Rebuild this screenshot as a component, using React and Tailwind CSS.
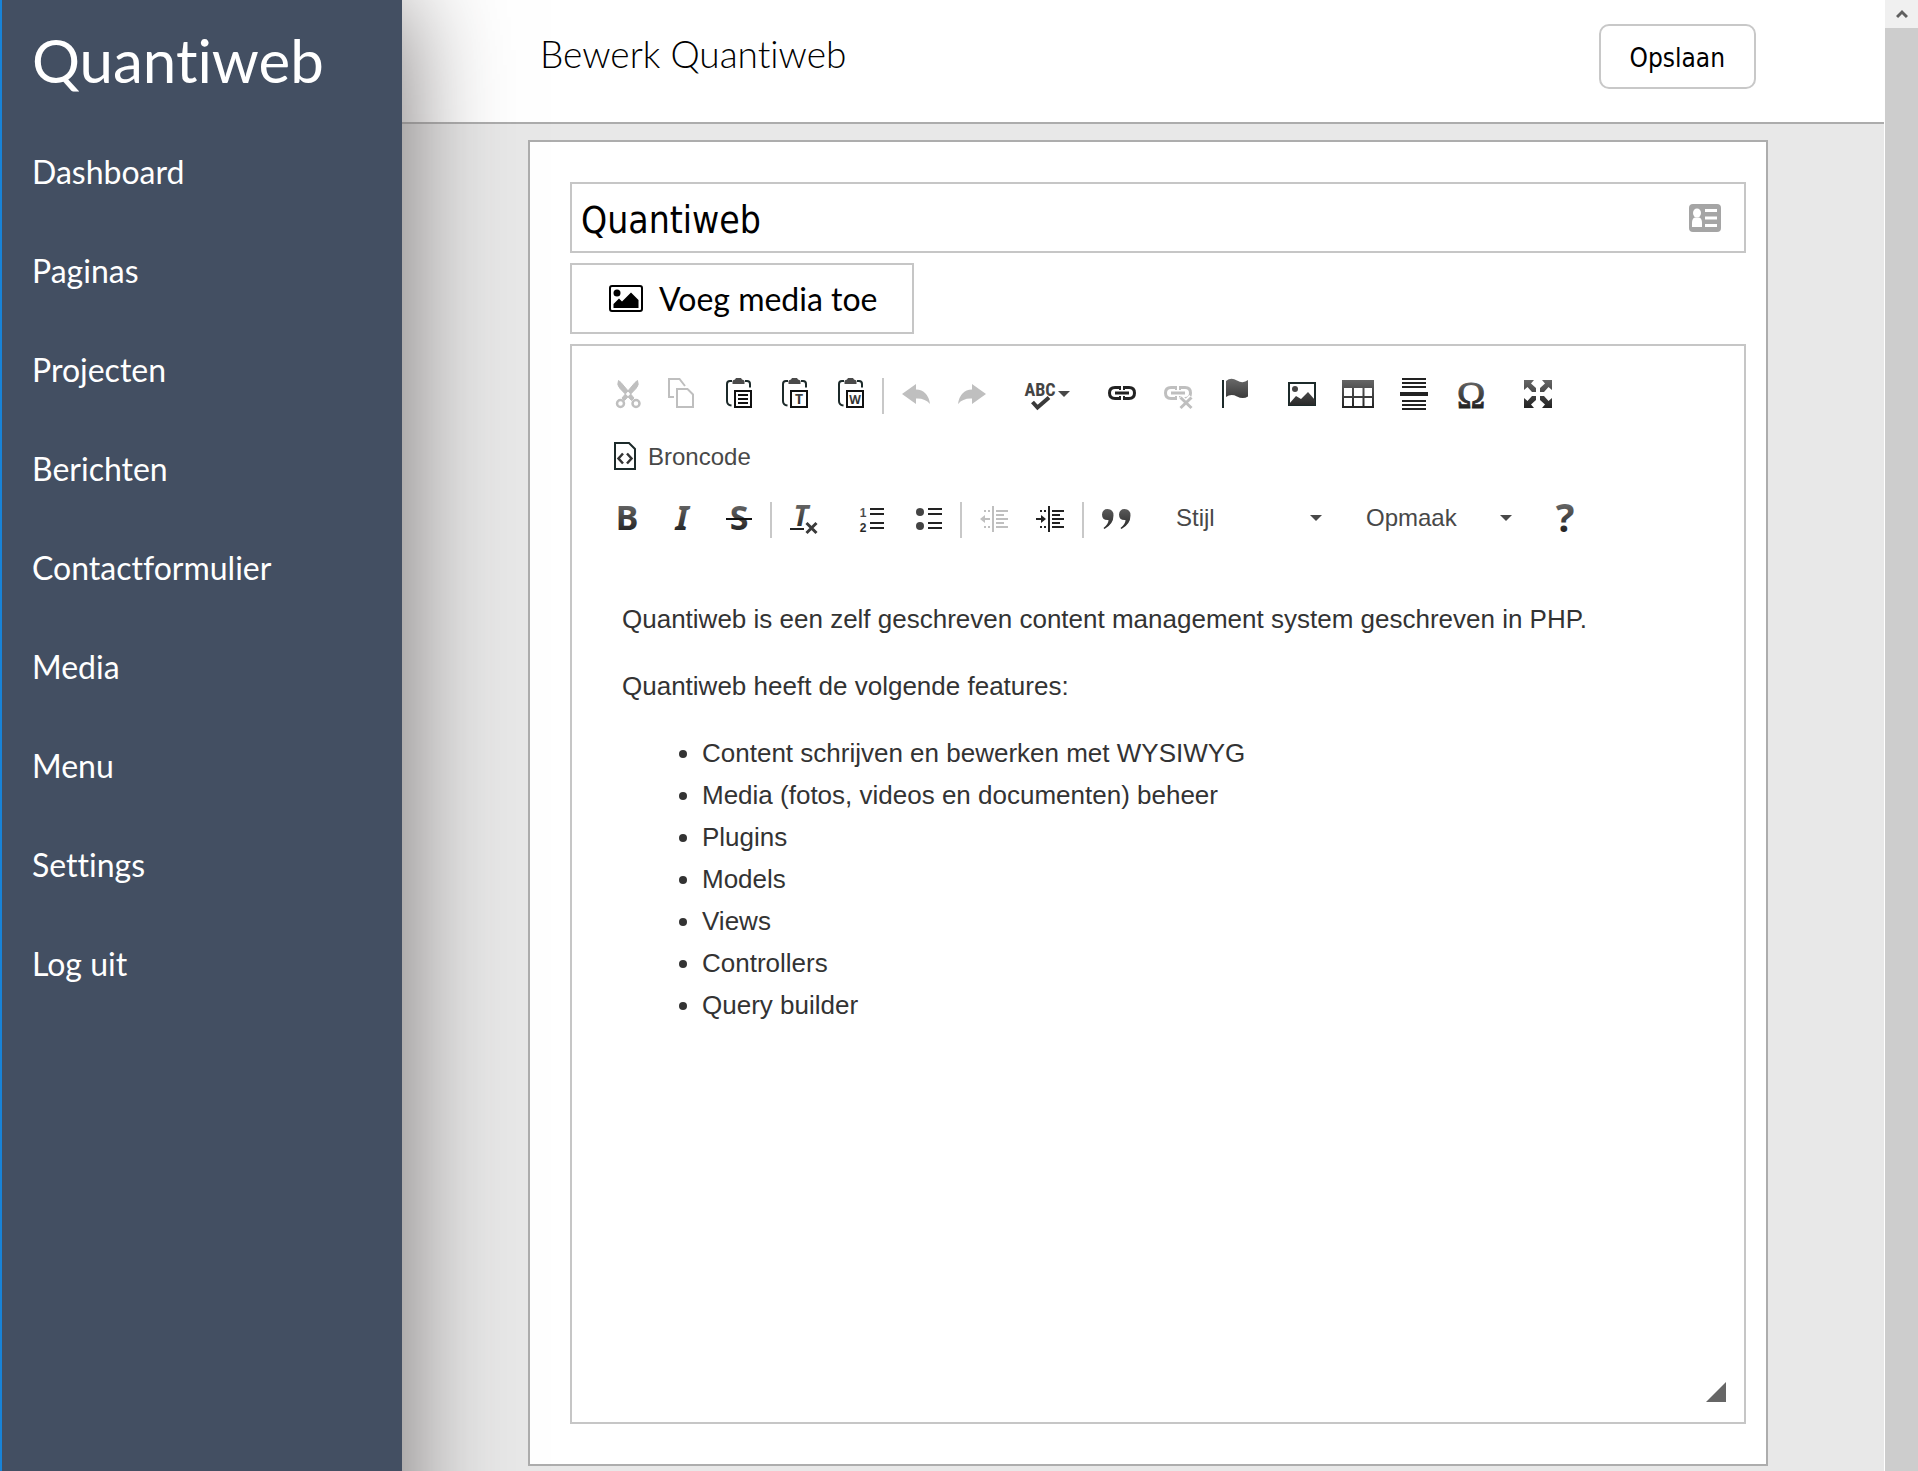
import React, { useState } from "react";

const menuItems = [
  { href: "#dashboard", label: "Dashboard" },
  { href: "#paginas", label: "Paginas" },
  { href: "#projecten", label: "Projecten" },
  { href: "#berichten", label: "Berichten" },
  { href: "#contactformulier", label: "Contactformulier" },
  { href: "#media", label: "Media" },
  { href: "#menu", label: "Menu" },
  { href: "#settings", label: "Settings" },
  { href: "#logout", label: "Log uit" },
];

const features = [
  "Content schrijven en bewerken met WYSIWYG",
  "Media (fotos, videos en documenten) beheer",
  "Plugins",
  "Models",
  "Views",
  "Controllers",
  "Query builder",
];

const INK = "url(#ink)";
const MUTED = "#bfbfbf";

const Glyph = ({ x, y, size, italic, family = "'Noto Sans', sans-serif", children }) => (
  <text
    x={x}
    y={y}
    fontSize={size}
    fontWeight="700"
    fontStyle={italic ? "italic" : "normal"}
    fontFamily={family}
    textAnchor="middle"
    fill={INK}
  >
    {children}
  </text>
);

const Clipboard = ({ children }) => (
  <>
    <path d="M10 3H8Q5 3 5 6V23Q5 27 9.500 27.500M23 3H25Q28 3 28 6V9.500" fill="none" stroke="#1c2a2a" strokeWidth="2" />
    <path d="M10.500 6V3Q10.500 2 13 1.500L14 0H19L20 1.500Q22.500 2 22.500 3V6Z" fill="#4a4a4a" />
    <rect x="13" y="13" width="16" height="16" fill="none" stroke="#111" strokeWidth="2" />
    {children}
  </>
);

const Chain = ({ color }) => (
  <g fill="none" stroke={color}>
    <path d="M14.500 9.500H9Q3.500 9.500 3.500 15T9 20.500H14.500M17.500 9.500H23Q28.500 9.500 28.500 15T23 20.500H17.500" strokeWidth="3" />
    <path d="M9 15H23" strokeWidth="3" />
    <path d="M14 8V12M18 8V12M14 18V22M18 18V22" strokeWidth="2" />
  </g>
);

const IndentLines = ({ color }) => (
  <g fill={color}>
    <rect x="14" y="4" width="2" height="26" />
    <rect x="18" y="8" width="12" height="2" />
    <rect x="18" y="12" width="8" height="2" />
    <rect x="18" y="16" width="12" height="2" />
    <rect x="18" y="20" width="8" height="2" />
    <rect x="18" y="24" width="12" height="2" />
    <path d="M6 8h2v2h-2zM10 8h2v2h-2zM6 24h2v2h-2zM10 24h2v2h-2z" />
  </g>
);

// toolbar drawings, all on a 32x32 grid
const icons = {
  cut: (
    <g fill="none" stroke={MUTED}>
      <path d="M8.500 2.500Q6.500 7 10 10.500L21.500 22.500L24 20L11 4.500ZM27.500 2.500Q29.500 7 26 10.500L14.500 22.500L12 20L25 4.500Z" fill={MUTED} stroke={MUTED} />
      <circle cx="10.500" cy="25.500" r="3.500" strokeWidth="2.500" />
      <circle cx="26" cy="25.500" r="3.500" strokeWidth="2.500" />
    </g>
  ),
  copy: (
    <path d="M19 8L13.500 1H3V19H8M11 11H21.500L27 16.500V29H11Z" fill="none" stroke={MUTED} strokeWidth="2" />
  ),
  paste: (
    <Clipboard>
      <path d="M16 17H26M16 21H26M16 25H26" stroke="#111" strokeWidth="2" />
    </Clipboard>
  ),
  pasteText: (
    <Clipboard>
      <Glyph x="21" y="26" size="14">T</Glyph>
    </Clipboard>
  ),
  pasteWord: (
    <Clipboard>
      <Glyph x="21" y="26" size="12">W</Glyph>
    </Clipboard>
  ),
  undo: <path d="M2 16L16 6V11.500Q28 12 30 26Q25 20 16 20.500V26Z" fill={MUTED} />,
  redo: <path d="M30 16L16 6V11.500Q4 12 2 26Q7 20 16 20.500V26Z" fill={MUTED} />,
  spell: (
    <>
      <text x="16" y="18" fontSize="18" fontWeight="700" fontFamily="'Liberation Sans Narrow', 'Roboto Condensed', 'Open Sans Condensed', Roboto, sans-serif" textAnchor="middle" fill="#444">ABC</text>
      <path d="M8.500 24L13.500 29.500L25 19.500" fill="none" stroke="#3a3a3a" strokeWidth="4" />
    </>
  ),
  link: <Chain color="#222" />,
  unlink: (
    <>
      <Chain color={MUTED} />
      <path d="M18 19L29.500 30.500M29.500 19L18 30.500" stroke="#fff" strokeWidth="6" />
      <path d="M18.500 19.500L29.500 30M29.500 19.500L18.500 30" stroke={MUTED} strokeWidth="3" />
    </>
  ),
  anchor: (
    <>
      <rect x="4" y="2" width="2" height="28" fill="#1c2a2a" />
      <path d="M8 3Q13 -1 19 2.500T30 2V18.500Q25 21.500 19 18.500T8 19Z" fill={INK} />
    </>
  ),
  image: (
    <>
      <rect x="3" y="5" width="26" height="22" fill="none" stroke="#1c2a2a" strokeWidth="2" />
      <circle cx="9" cy="11" r="3" fill="#444" />
      <path d="M3 26L10 18L15 21L22 14L29 22V27H3Z" fill={INK} />
    </>
  ),
  table: (
    <path d="M0 2H32V30H0ZM2 10V18H10V10ZM12 10V18H20.500V10ZM22.500 10V18H30V10ZM2 20V28H10V20ZM12 20V28H20.500V20ZM22.500 20V28H30V20Z" fill={INK} fillRule="evenodd" />
  ),
  rule: (
    <path d="M4 0H28V2H4ZM4 4H28V6H4ZM4 8H28V10H4ZM2 14H30V18H2ZM4 22H28V24H4ZM4 26H28V28H4ZM4 30H28V32H4Z" fill="#222" />
  ),
  omega: (
    <text x="17" y="30" fontSize="38" fontFamily="'Liberation Serif', serif" textAnchor="middle" fill={INK} stroke={INK} strokeWidth="1">Ω</text>
  ),
  maximize: (
    <path
      d="M2 2H12L9 5.500L14 10V14H10L5.500 9L2 12ZM30 2H20L23 5.500L18 10V14H22L26.500 9L30 12ZM2 30H12L9 26.500L14 22V18H10L5.500 23L2 20ZM30 30H20L23 26.500L18 22V18H22L26.500 23L30 20Z"
      fill={INK}
    />
  ),
  source: (
    <>
      <path d="M5 3H19L25 9V29H5Z" fill="none" stroke="#1c2a2a" strokeWidth="2" />
      <path d="M13 13.500L8.500 18.500L13 23.500M17 13.500L21.500 18.500L17 23.500" fill="none" stroke="#333" strokeWidth="2.500" />
    </>
  ),
  bold: <Glyph x="17" y="28" size="34">B</Glyph>,
  italic: <Glyph x="16" y="28" size="34" italic>I</Glyph>,
  strike: (
    <>
      <Glyph x="17" y="28" size="34">S</Glyph>
      <path d="M4 17H30" stroke="#111" strokeWidth="2" />
    </>
  ),
  removeFormat: (
    <>
      <Glyph x="13" y="24" size="28" italic>T</Glyph>
      <path d="M2 27H16" stroke="#222" strokeWidth="2" />
      <path d="M18.500 21L28.500 31M28.500 21L18.500 31" stroke="#3a3a3a" strokeWidth="3" />
    </>
  ),
  numbered: (
    <>
      <Glyph x="7" y="15" size="12" family="'Liberation Sans', sans-serif">1</Glyph>
      <Glyph x="7" y="30" size="12" family="'Liberation Sans', sans-serif">2</Glyph>
      <path d="M14 7H28M14 12H28M14 21H28M14 26H28" stroke="#222" strokeWidth="2" />
    </>
  ),
  bulleted: (
    <>
      <circle cx="8" cy="10" r="4" fill="#444" />
      <circle cx="8" cy="24" r="4" fill="#444" />
      <path d="M16 7H30M16 12H30M16 21H30M16 26H30" stroke="#222" strokeWidth="2" />
    </>
  ),
  outdent: (
    <>
      <IndentLines color={MUTED} />
      <path d="M2 17L7 13V16H12V18H7V21Z" fill={MUTED} />
    </>
  ),
  indent: (
    <>
      <IndentLines color="#222" />
      <path d="M12 17L7 13V16H2V18H7V21Z" fill="#222" />
    </>
  ),
  quote: (
    <path
      d="M7.500 7Q13.500 7 13.500 13.500Q13.500 22 4.500 27L3.500 26Q8.500 22 8.500 18Q2 18.500 2 12.500Q2.500 7 7.500 7ZM24.500 7Q30.500 7 30.500 13.500Q30.500 22 21.500 27L20.500 26Q25.500 22 25.500 18Q19 18.500 19 12.500Q19.500 7 24.500 7Z"
      fill={INK}
    />
  ),
  about: <Glyph x="17" y="30" size="39">?</Glyph>,
};

const Caret = () => (
  <svg viewBox="0 0 12 6" className="w-3 h-[6px] shrink-0">
    <path d="M0 0H12L6 6Z" fill="#484848" />
  </svg>
);

const ToolButton = ({ icon, title, disabled, label, dropdown }) => (
  <button type="button" title={title} aria-label={title} disabled={disabled} className="h-12 px-3 flex items-center">
    <svg viewBox="0 0 32 32" className="w-8 h-8 shrink-0 overflow-visible">
      {icons[icon]}
    </svg>
    {label && <span className="pl-[6px] pt-[2px] text-2xl">{label}</span>}
    {dropdown && <span className="pl-[2px]"><Caret /></span>}
  </button>
);

const Separator = () => <span className="w-[2px] h-9 mt-2 mx-1 bg-[#c8c8c8]" />;

const Group = ({ children }) => <div className="flex items-start">{children}</div>;

const Combo = ({ label }) => (
  <div className="relative">
    <select
      aria-label={label}
      className="appearance-none w-[178px] h-12 pl-5 pr-8 bg-transparent text-2xl text-[#484848] outline-none"
    >
      <option>{label}</option>
    </select>
    <span className="absolute right-3 inset-y-0 flex items-center pointer-events-none">
      <Caret />
    </span>
  </div>
);

const Toolbar = () => (
  <div className="pt-6 px-[26px] flex flex-col gap-[14px] text-[#484848] font-['Liberation_Sans',Arial,sans-serif]">
    <div className="flex flex-wrap gap-x-3 gap-y-[14px]">
      <Group>
        <ToolButton icon="cut" title="Knippen" disabled />
        <ToolButton icon="copy" title="Kopiëren" disabled />
        <ToolButton icon="paste" title="Plakken" />
        <ToolButton icon="pasteText" title="Plakken als platte tekst" />
        <ToolButton icon="pasteWord" title="Plakken vanuit Word" />
        <Separator />
        <ToolButton icon="undo" title="Ongedaan maken" disabled />
        <ToolButton icon="redo" title="Opnieuw uitvoeren" disabled />
      </Group>
      <Group>
        <ToolButton icon="spell" title="Spellingscontrole" dropdown />
      </Group>
      <Group>
        <ToolButton icon="link" title="Link invoegen" />
        <ToolButton icon="unlink" title="Link verwijderen" disabled />
        <ToolButton icon="anchor" title="Interne link" />
      </Group>
      <Group>
        <ToolButton icon="image" title="Afbeelding" />
        <ToolButton icon="table" title="Tabel" />
        <ToolButton icon="rule" title="Horizontale lijn" />
        <ToolButton icon="omega" title="Speciaal teken" />
      </Group>
      <Group>
        <ToolButton icon="maximize" title="Maximaliseren" />
      </Group>
      <Group>
        <ToolButton icon="source" title="Broncode" label="Broncode" />
      </Group>
    </div>
    <div className="flex flex-wrap gap-x-3 gap-y-[14px]">
      <Group>
        <ToolButton icon="bold" title="Vet" />
        <ToolButton icon="italic" title="Cursief" />
        <ToolButton icon="strike" title="Doorhalen" />
        <Separator />
        <ToolButton icon="removeFormat" title="Opmaak verwijderen" />
      </Group>
      <Group>
        <ToolButton icon="numbered" title="Genummerde lijst" />
        <ToolButton icon="bulleted" title="Opsomming" />
        <Separator />
        <ToolButton icon="outdent" title="Inspringing verkleinen" disabled />
        <ToolButton icon="indent" title="Inspringing vergroten" />
        <Separator />
        <ToolButton icon="quote" title="Citaatblok" />
      </Group>
      <Combo label="Stijl" />
      <Combo label="Opmaak" />
      <Group>
        <ToolButton icon="about" title="Over" />
      </Group>
    </div>
  </div>
);

// runs past the bottom edge so its shadow does not fade out there
const Sidebar = () => (
  <aside className="relative z-10 w-[402px] -mb-32 shrink-0 border-l-2 border-[#1883d7] bg-[#434f62] text-white shadow-[0_0_100px_#777272]">
    <h1 className="h-[122px] pt-6 pl-[30px] text-[60px] leading-[72px]">Quantiweb</h1>
    <nav>
      {menuItems.map((item) => (
        <a key={item.href} href={item.href} className="block py-[30px] pl-[30px] text-[32px] leading-[39px]">
          {item.label}
        </a>
      ))}
    </nav>
  </aside>
);

const Header = () => (
  <header className="bg-white border-b-2 border-[#acacac]">
    <div className="ml-[126px] mr-[116px] pt-6 pb-[33px] px-3 flex justify-between items-start">
      <h2 className="pt-2 text-[37px] leading-[44px] font-light text-black">Bewerk Quantiweb</h2>
      <button
        type="submit"
        form="page-form"
        className="h-[65px] px-[29px] pt-[3px] border-2 border-[#c8c8c8] rounded-[10px] text-[26px] text-black font-['DejaVu_Sans_Condensed','Noto_Sans',sans-serif]"
      >
        Opslaan
      </button>
    </div>
  </header>
);

const Scrollbar = () => (
  <div className="w-[34px] shrink-0 border-l border-white bg-[#cdcdcd]">
    <div className="h-7 bg-[#f0f0f0] flex items-center justify-center">
      <svg viewBox="0 0 12 10" className="w-3 h-[10px]">
        <path d="M1 8L6 3L11 8" fill="none" stroke="#606060" strokeWidth="3" />
      </svg>
    </div>
  </div>
);

const App = () => {
  const [title, setTitle] = useState("Quantiweb");

  return (
    <div className="min-h-screen flex overflow-hidden bg-[#e8e8e8] font-[Lato,sans-serif] [font-variant-ligatures:none]">
      {/* Shared gradient for the toolbar icons */}
      <svg className="absolute w-0 h-0" aria-hidden="true">
        <linearGradient id="ink" gradientUnits="userSpaceOnUse" x1="0" y1="2" x2="0" y2="30">
          <stop offset="0" stopColor="#666" />
          <stop offset="1" stopColor="#222" />
        </linearGradient>
      </svg>

      <Sidebar />

      <div className="flex-1 min-w-0">
        <Header />

        <form
          id="page-form"
          onSubmit={(e) => e.preventDefault()}
          className="mt-4 ml-[126px] mr-[116px] py-10 pl-10 pr-5 flex flex-col gap-[10px] bg-white border-2 border-[#adadad]"
        >
          <div className="h-[71px] pl-[9px] pr-[23px] flex items-center border-2 border-[#c6c6c6]">
            <input
              type="text"
              aria-label="Titel"
              value={title}
              onChange={(e) => setTitle(e.target.value)}
              className="flex-1 min-w-0 pt-[6px] bg-transparent text-[37px] leading-[44px] text-black outline-none font-['DejaVu_Sans_Condensed','Noto_Sans',sans-serif]"
            />
            <svg viewBox="0 0 32 28" className="w-8 h-7 shrink-0">
              <rect width="32" height="28" rx="4" fill="#a5a5a5" />
              <ellipse cx="8" cy="9" rx="4" ry="4.500" fill="#fff" />
              <path d="M3 23V19Q3 14 6 13.500H10Q13 14 13 19V23Z" fill="#fff" />
              <path d="M16 6.500H28M16 14H28M16 21.500H28" stroke="#fff" strokeWidth="3" />
            </svg>
          </div>

          <button
            type="button"
            className="self-start h-[71px] pl-[37px] pr-[35px] flex items-center gap-4 border-2 border-[#c6c6c6] text-[32px] leading-[39px] text-black"
          >
            <svg viewBox="0 0 34 27" className="w-[34px] h-[27px]">
              <rect x="1" y="1" width="32" height="25" rx="2" fill="none" stroke="#000" strokeWidth="2" />
              <circle cx="8" cy="8" r="3.500" fill="#000" />
              <path d="M4.500 23V19L10 13.500L13 16.500L22 7.500L29.500 15V23Z" fill="#000" />
            </svg>
            Voeg media toe
          </button>

          {/* Editor */}
          <div className="border-2 border-[#c6c6c6]">
            <Toolbar />
            <div className="min-h-[840px] pt-14 px-[50px] text-[26px] leading-[42px] text-[#333] font-['Liberation_Sans',Arial,sans-serif]">
              <p>Quantiweb is een zelf geschreven content management system geschreven in PHP.</p>
              <p className="mt-[25px]">Quantiweb heeft de volgende features:</p>
              <ul className="mt-[25px] pl-20 list-disc">
                {features.map((feature) => (
                  <li key={feature}>{feature}</li>
                ))}
              </ul>
            </div>
            <div className="pb-5 pr-[18px] flex justify-end">
              <svg viewBox="0 0 20 20" className="w-5 h-5">
                <path d="M20 0V20H0Z" fill="#666" />
              </svg>
            </div>
          </div>
        </form>
      </div>

      <Scrollbar />
    </div>
  );
};

export default App;
